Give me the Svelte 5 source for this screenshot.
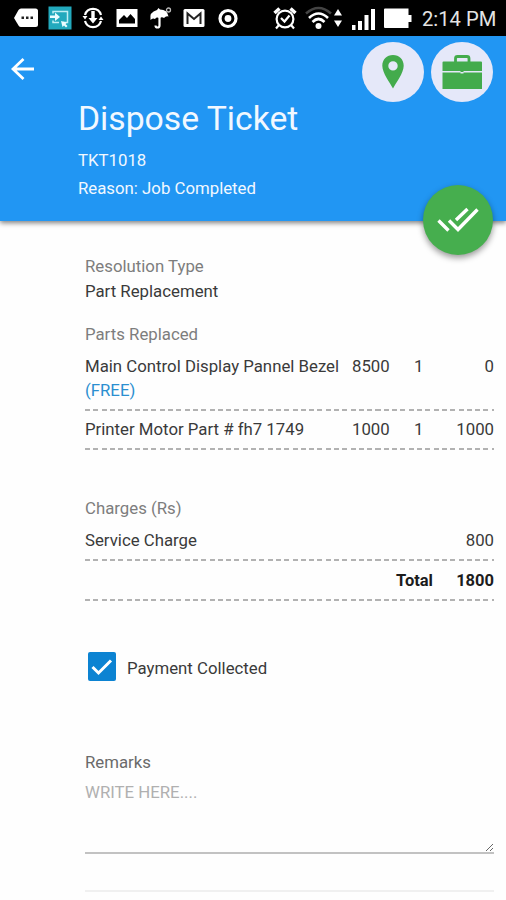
<script lang="ts">
  interface Part {
    name: string;
    free?: boolean;
    rate: number;
    qty: number;
    amount: number;
  }

  const parts: Part[] = [
    { name: "Main Control Display Pannel Bezel", free: true, rate: 8500, qty: 1, amount: 0 },
    { name: "Printer Motor Part # fh7 1749", rate: 1000, qty: 1, amount: 1000 },
  ];

  const serviceCharge = 800;
  const total = parts.reduce((sum, p) => sum + p.amount, serviceCharge);

  let collected = $state(true);
  let remarks = $state("");
</script>

<div class="screen">
  <div class="statusbar">
    <div class="notifications">
      <svg width="24" height="24" viewBox="0 0 24 24">
        <path d="M7 2.5H21.500Q24 2.500 24 5V18.500Q24 21 21.500 21H7Q5.500 21 4.500 19.500L0 12L4.500 4Q5.500 2.500 7 2.500Z" fill="#fff" />
        <path d="M7.500 10.500h2.500v2.500h-2.500zM12 10.500h2.500v2.500h-2.500zM16.500 10.500h2.500v2.500h-2.500z" fill="#222" />
      </svg>
      <svg width="24" height="24" viewBox="0 0 24 24">
        <rect x="0.500" y="0.500" width="23" height="23" fill="#22a9bd" />
        <path d="M5 7.500V5.500H19.500V16.500H15M5 14.500v2h6" fill="none" stroke="#bfeef4" stroke-width="1.500" />
        <path d="M2 9.500h5V6.500l5 4.500-5 4v-3H2zM13 15l6 1.500-1.500 1.500 2 2-1.500 1.500-2-2L14.500 21z" fill="#eafcff" />
      </svg>
      <svg width="24" height="24" viewBox="0 0 24 24">
        <path d="M4 9A8.300 8.300 0 0 1 20 9M4 15A8.300 8.300 0 0 0 20 15" fill="none" stroke="#fff" stroke-width="2.200" />
        <path d="M1.500 10h5l-2.500 3.500zM22.500 14h-5l2.500-3.500zM10.300 5h3.400v7h2.800L12 17.500 7.500 12h2.800z" fill="#fff" />
      </svg>
      <svg width="24" height="24" viewBox="0 0 24 24">
        <path fill-rule="evenodd" d="M1.500 3h21v18h-21zM4 17.500h16V13l-4.500-5-3.500 4-3-3-5 5z" fill="#fff" />
      </svg>
      <svg width="24" height="24" viewBox="0 0 24 24">
        <path d="M1.500 14Q0 6 8 4L9.500 2L11 3.500Q18.500 3.500 19.500 10.500Q17 9.500 15 12Q12.500 10.500 10.500 12.500Q8 10.500 6 13Q3.500 11.500 1.500 14Z" fill="#fff" />
        <path d="M10.500 10v9.500q0 2-2 2t-2-2" fill="none" stroke="#fff" stroke-width="2.200" />
        <circle cx="19.500" cy="4" r="2" fill="none" stroke="#bbb" stroke-width="1.300" />
      </svg>
      <svg width="24" height="24" viewBox="0 0 24 24">
        <rect x="1.500" y="3" width="21" height="18" rx="1.500" fill="#fff" />
        <path d="M5.500 18V7.500L12 13L18.500 7.500V18" fill="none" stroke="#222" stroke-width="2" />
      </svg>
      <svg width="24" height="24" viewBox="0 0 24 24">
        <circle cx="12" cy="12.500" r="8" fill="none" stroke="#fff" stroke-width="3.200" />
        <circle cx="12" cy="12.500" r="3.400" fill="#fff" />
      </svg>
    </div>
    <div class="system">
      <svg class="alarm" width="24" height="24" viewBox="0 0 24 24">
        <g fill="none" stroke="#fff" stroke-width="2.200">
          <circle cx="12" cy="13" r="8.400" />
          <path d="M1.500 7L6.500 2.500M22.500 7L17.500 2.500" stroke-width="3.500" />
          <path d="M8 12l3.500 3.500L16.500 9.500M6 19l-3 3.500M18 19l3 3.500" />
        </g>
      </svg>
      <svg class="wifi" width="27" height="24" viewBox="0 0 27 24">
        <g fill="none" stroke-width="2.600">
          <path d="M1 7.500Q13.500-3.500 26 7.500" stroke="#444" />
          <path d="M4 12Q13.500 3 23 12M7.500 16Q13.500 10 19.500 16" stroke="#fff" />
        </g>
        <circle cx="13.500" cy="20" r="3" fill="#fff" />
      </svg>
      <svg class="traffic" width="8" height="24" viewBox="0 0 8 24">
        <path d="M4 3L8 9.500H0zM4 21L0 14.500H8z" fill="#fff" />
      </svg>
      <svg class="signal" width="24" height="24" viewBox="0 0 24 24">
        <path d="M0 19h3.500v5H0zM6 15h4v9H6zM12.500 9h4v15h-4zM19 3h4v21h-4z" fill="#fff" />
      </svg>
      <svg class="battery" width="28" height="24" viewBox="0 0 28 24">
        <path d="M1 2.500H24.500V9H27.500V16H24.500V22H1Q0 22 0 21V3.500Q0 2.500 1 2.500Z" fill="#fff" />
      </svg>
      <span class="clock">2:14 PM</span>
    </div>
  </div>

  <header>
    <div class="toolbar">
      <button class="back" aria-label="Back">
        <svg width="24" height="24" viewBox="0 0 24 24">
          <path d="M23 12H2.500M12.500 2L2 12L12.500 22" fill="none" stroke="#fff" stroke-width="2.800" />
        </svg>
      </button>
      <div class="actions">
        <button class="round" aria-label="Location">
          <svg width="62" height="60" viewBox="0 0 62 60">
            <path fill-rule="evenodd" d="M31 13C24.800 13 20.300 17.500 20.300 23.800C20.300 31 28 41 31 46.500C34 41 41.700 31 41.700 23.800C41.700 17.500 37.200 13 31 13ZM31 19.200a4.700 4.700 0 1 1 0 9.400a4.700 4.700 0 1 1 0-9.400Z" fill="#43ab4c" />
          </svg>
        </button>
        <button class="round" aria-label="Jobs">
          <svg width="62" height="60" viewBox="0 0 62 60">
            <path d="M24.500 20V16.500Q24.500 14.500 26.500 14.500H36Q38 14.500 38 16.500V20" fill="none" stroke="#43ab4c" stroke-width="2.800" />
            <path d="M12.500 19.500H50Q51 19.500 51 20.500V29H32.500V30H29.500V29H11.500V20.500Q11.500 19.500 12.500 19.500ZM11.500 30.500H29.500V31.500H32.500V30.500H51V47H11.500Z" fill="#43ab4c" />
          </svg>
        </button>
      </div>
    </div>
    <h1>Dispose Ticket</h1>
    <p class="ticket">TKT1018</p>
    <p class="reason">Reason: Job Completed</p>
    <button class="fab" aria-label="Dispose">
      <svg width="70" height="70" viewBox="0 0 70 70">
        <path d="M15.500 35.500L25.500 45.500M33 35L44.500 24M26 35.500L35 44.500L54.500 24.500" fill="none" stroke="#fff" stroke-width="3.400" />
      </svg>
    </button>
  </header>

  <main>
    <div class="label">Resolution Type</div>
    <div class="value">Part Replacement</div>

    <div class="label parts-label">Parts Replaced</div>
    {#each parts as part}
      <div class="row part">
        <span>{part.name} {#if part.free}<span class="free">(FREE)</span>{/if}</span>
        <span class="rate">{part.rate}</span>
        <span class="qty">{part.qty}</span>
        <span class="num">{part.amount}</span>
      </div>
    {/each}

    <div class="label charges-label">Charges (Rs)</div>
    <div class="row charge">
      <span>Service Charge</span>
      <span class="num">{serviceCharge}</span>
    </div>
    <div class="row charge total">
      <span class="num">Total</span>
      <span class="num">{total}</span>
    </div>

    <label class="check">
      <input type="checkbox" bind:checked={collected} />
      <span class="box">
        {#if collected}
          <svg width="28" height="29" viewBox="0 0 28 29">
            <path d="M4.500 15L10.500 21L23 8.500" fill="none" stroke="#fff" stroke-width="3" />
          </svg>
        {/if}
      </span>
      <span class="check-text">Payment Collected</span>
    </label>

    <label class="label remarks-label" for="remarks">Remarks</label>
    <textarea id="remarks" placeholder="WRITE HERE...." bind:value={remarks}></textarea>
    <div class="divider"></div>
  </main>
</div>

<style>
  :global(body) {
    background: #fefefe;
  }
  .screen {
    width: 506px;
    height: 900px;
    overflow: hidden;
    background: #fefefe;
    font-family: Roboto, sans-serif;
    font-size: 16.8px;
    line-height: 24px;
    color: #3a3a3a;
  }
  .statusbar {
    display: flex;
    justify-content: space-between;
    height: 36px;
    padding-left: 14px;
    background: #000;
  }
  .notifications,
  .system {
    display: flex;
    align-items: center;
  }
  .notifications {
    gap: 9.7px;
  }
  .system {
    width: 233px;
  }
  .wifi,
  .battery {
    margin-left: 8px;
  }
  .traffic {
    margin-left: 2px;
  }
  .signal {
    margin-left: 10px;
  }
  .clock {
    margin: 2px 0 0 10px;
    font-size: 20.2px;
    white-space: nowrap;
    color: #e4e4e4;
  }
  button {
    display: block;
    padding: 0;
    border: 0;
    background: none;
    cursor: pointer;
  }
  svg {
    display: block;
    flex: none;
  }
  header {
    position: relative;
    box-sizing: border-box;
    height: 185px;
    padding-left: 78px;
    background: #2196f3;
    box-shadow: 0 2px 5px rgba(0, 0, 0, 0.5);
    color: #f1f8ff;
  }
  .toolbar {
    display: flex;
    justify-content: space-between;
    height: 62px;
    margin-left: -78px;
    padding: 6px 13px 0 11px;
  }
  .back {
    height: 24px;
    margin-top: 15px;
  }
  .actions {
    display: flex;
    gap: 7px;
  }
  .round {
    width: 62px;
    height: 60px;
    border-radius: 50%;
    background: #e5e8f9;
  }
  h1 {
    margin: -5px 0 0;
    font-size: 33.7px;
    font-weight: 400;
    line-height: 40px;
  }
  p {
    margin: 0;
  }
  .ticket {
    margin-top: 9px;
  }
  .reason {
    margin-top: 4px;
  }
  .fab {
    position: absolute;
    right: 13px;
    bottom: -34px;
    width: 70px;
    height: 70px;
    border-radius: 50%;
    background: #46ae4e;
    box-shadow: 0 3px 6px rgba(0, 0, 0, 0.4);
  }
  main {
    padding: 33px 12px 0 85px;
  }
  .label {
    display: block;
    color: #7d7d7d;
  }
  .value {
    margin-top: 1px;
  }
  .parts-label {
    margin: 19px 0 2px;
  }
  .row {
    display: grid;
    padding-bottom: 9px;
    background: repeating-linear-gradient(90deg, #b2b2b2 0 5px, transparent 5px 8.3px) bottom / 100% 2px no-repeat;
  }
  .part {
    grid-template-columns: 267px 62px 20px 1fr;
    padding-top: 6px;
  }
  .charge {
    grid-template-columns: 348px 1fr;
    padding-top: 8px;
  }
  .free {
    display: block;
    color: #2b8fd0;
  }
  .num {
    text-align: right;
  }
  .charges-label {
    margin-top: 46px;
  }
  .total {
    padding-bottom: 8px;
    font-size: 16.5px;
    font-weight: 700;
    color: #1c1c1c;
  }
  .check {
    display: flex;
    align-items: center;
    margin: 51px 0 0 3px;
  }
  .check input {
    position: absolute;
    opacity: 0;
  }
  .box {
    width: 28px;
    height: 29px;
    border-radius: 2px;
    background: #0c83d2;
  }
  .check-text {
    margin: 2px 0 0 11px;
  }
  .remarks-label {
    margin-top: 69px;
    color: #6a6a6a;
  }
  textarea {
    display: block;
    box-sizing: border-box;
    width: 100%;
    height: 80px;
    padding: 6px 0;
    border: 0;
    border-bottom: 2px solid #c2c2c2;
    outline: none;
    background: none;
    font: inherit;
  }
  textarea::placeholder {
    color: #b0b0b0;
  }
  .divider {
    height: 2px;
    margin-top: 36px;
    background: #f0f0f0;
  }
</style>
